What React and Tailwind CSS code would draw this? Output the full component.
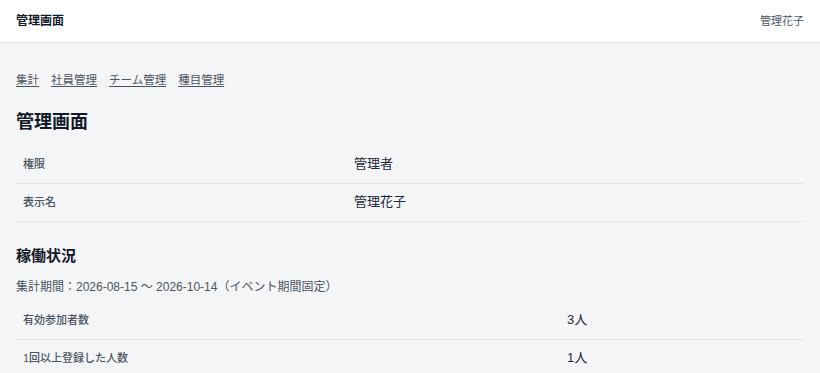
import React from "react";

const font = { fontFamily: '"Liberation Sans", "Noto Sans CJK JP", sans-serif' };

const profileRows = [
  { label: "権限", value: "管理者" },
  { label: "表示名", value: "管理花子" },
];

const statRows = [
  { label: "有効参加者数", value: "3人" },
  { label: "1回以上登録した人数", value: "1人" },
];

function InfoTable({ rows, labelWidth }) {
  return (
    <div className="flex flex-col">
      {rows.map((row) => (
        <div key={row.label} className="flex h-[38px] border-b border-[#e3e5e8]">
          <div className={`${labelWidth} pl-[7px] pt-[10px] text-[11px] leading-4 text-[#4b5563] font-medium`}>
            {row.label}
          </div>
          <div className="pt-[8px] text-[13px] leading-5 text-[#1f2937]">{row.value}</div>
        </div>
      ))}
    </div>
  );
}

export default function App() {
  const links = ["集計", "社員管理", "チーム管理", "種目管理"];

  return (
    <div className="min-h-screen bg-[#f4f5f7]" style={font}>
      <header className="flex h-[43px] items-center justify-between border-b border-[#e3e5e8] bg-white px-4">
        <div className="text-[12px] font-bold text-[#111827]">管理画面</div>
        <div className="text-[11px] text-[#4b5563]">管理花子</div>
      </header>

      <main className="px-4 pt-[28px]">
        <nav className="flex gap-[12px] text-[11.5px] leading-[18px] text-[#4b5563]">
          {links.map((l) => (
            <a key={l} href="#" className="underline underline-offset-2">
              {l}
            </a>
          ))}
        </nav>

        <h1 className="mt-[20px] text-[18px] font-bold leading-[27px] text-[#111827]">管理画面</h1>
        <div className="mt-[10px]">
          <InfoTable rows={profileRows} labelWidth="w-[338px]" />
        </div>

        <h2 className="mt-[23px] text-[15px] font-bold leading-[22px] text-[#111827]">稼働状況</h2>
        <p className="mt-[11px] text-[12px] leading-[18px] text-[#4b5563]">
          集計期間：2026-08-15 〜 2026-10-14（イベント期間固定）
        </p>
        <div className="mt-[6px]">
          <InfoTable rows={statRows} labelWidth="w-[551px]" />
        </div>
      </main>
    </div>
  );
}
